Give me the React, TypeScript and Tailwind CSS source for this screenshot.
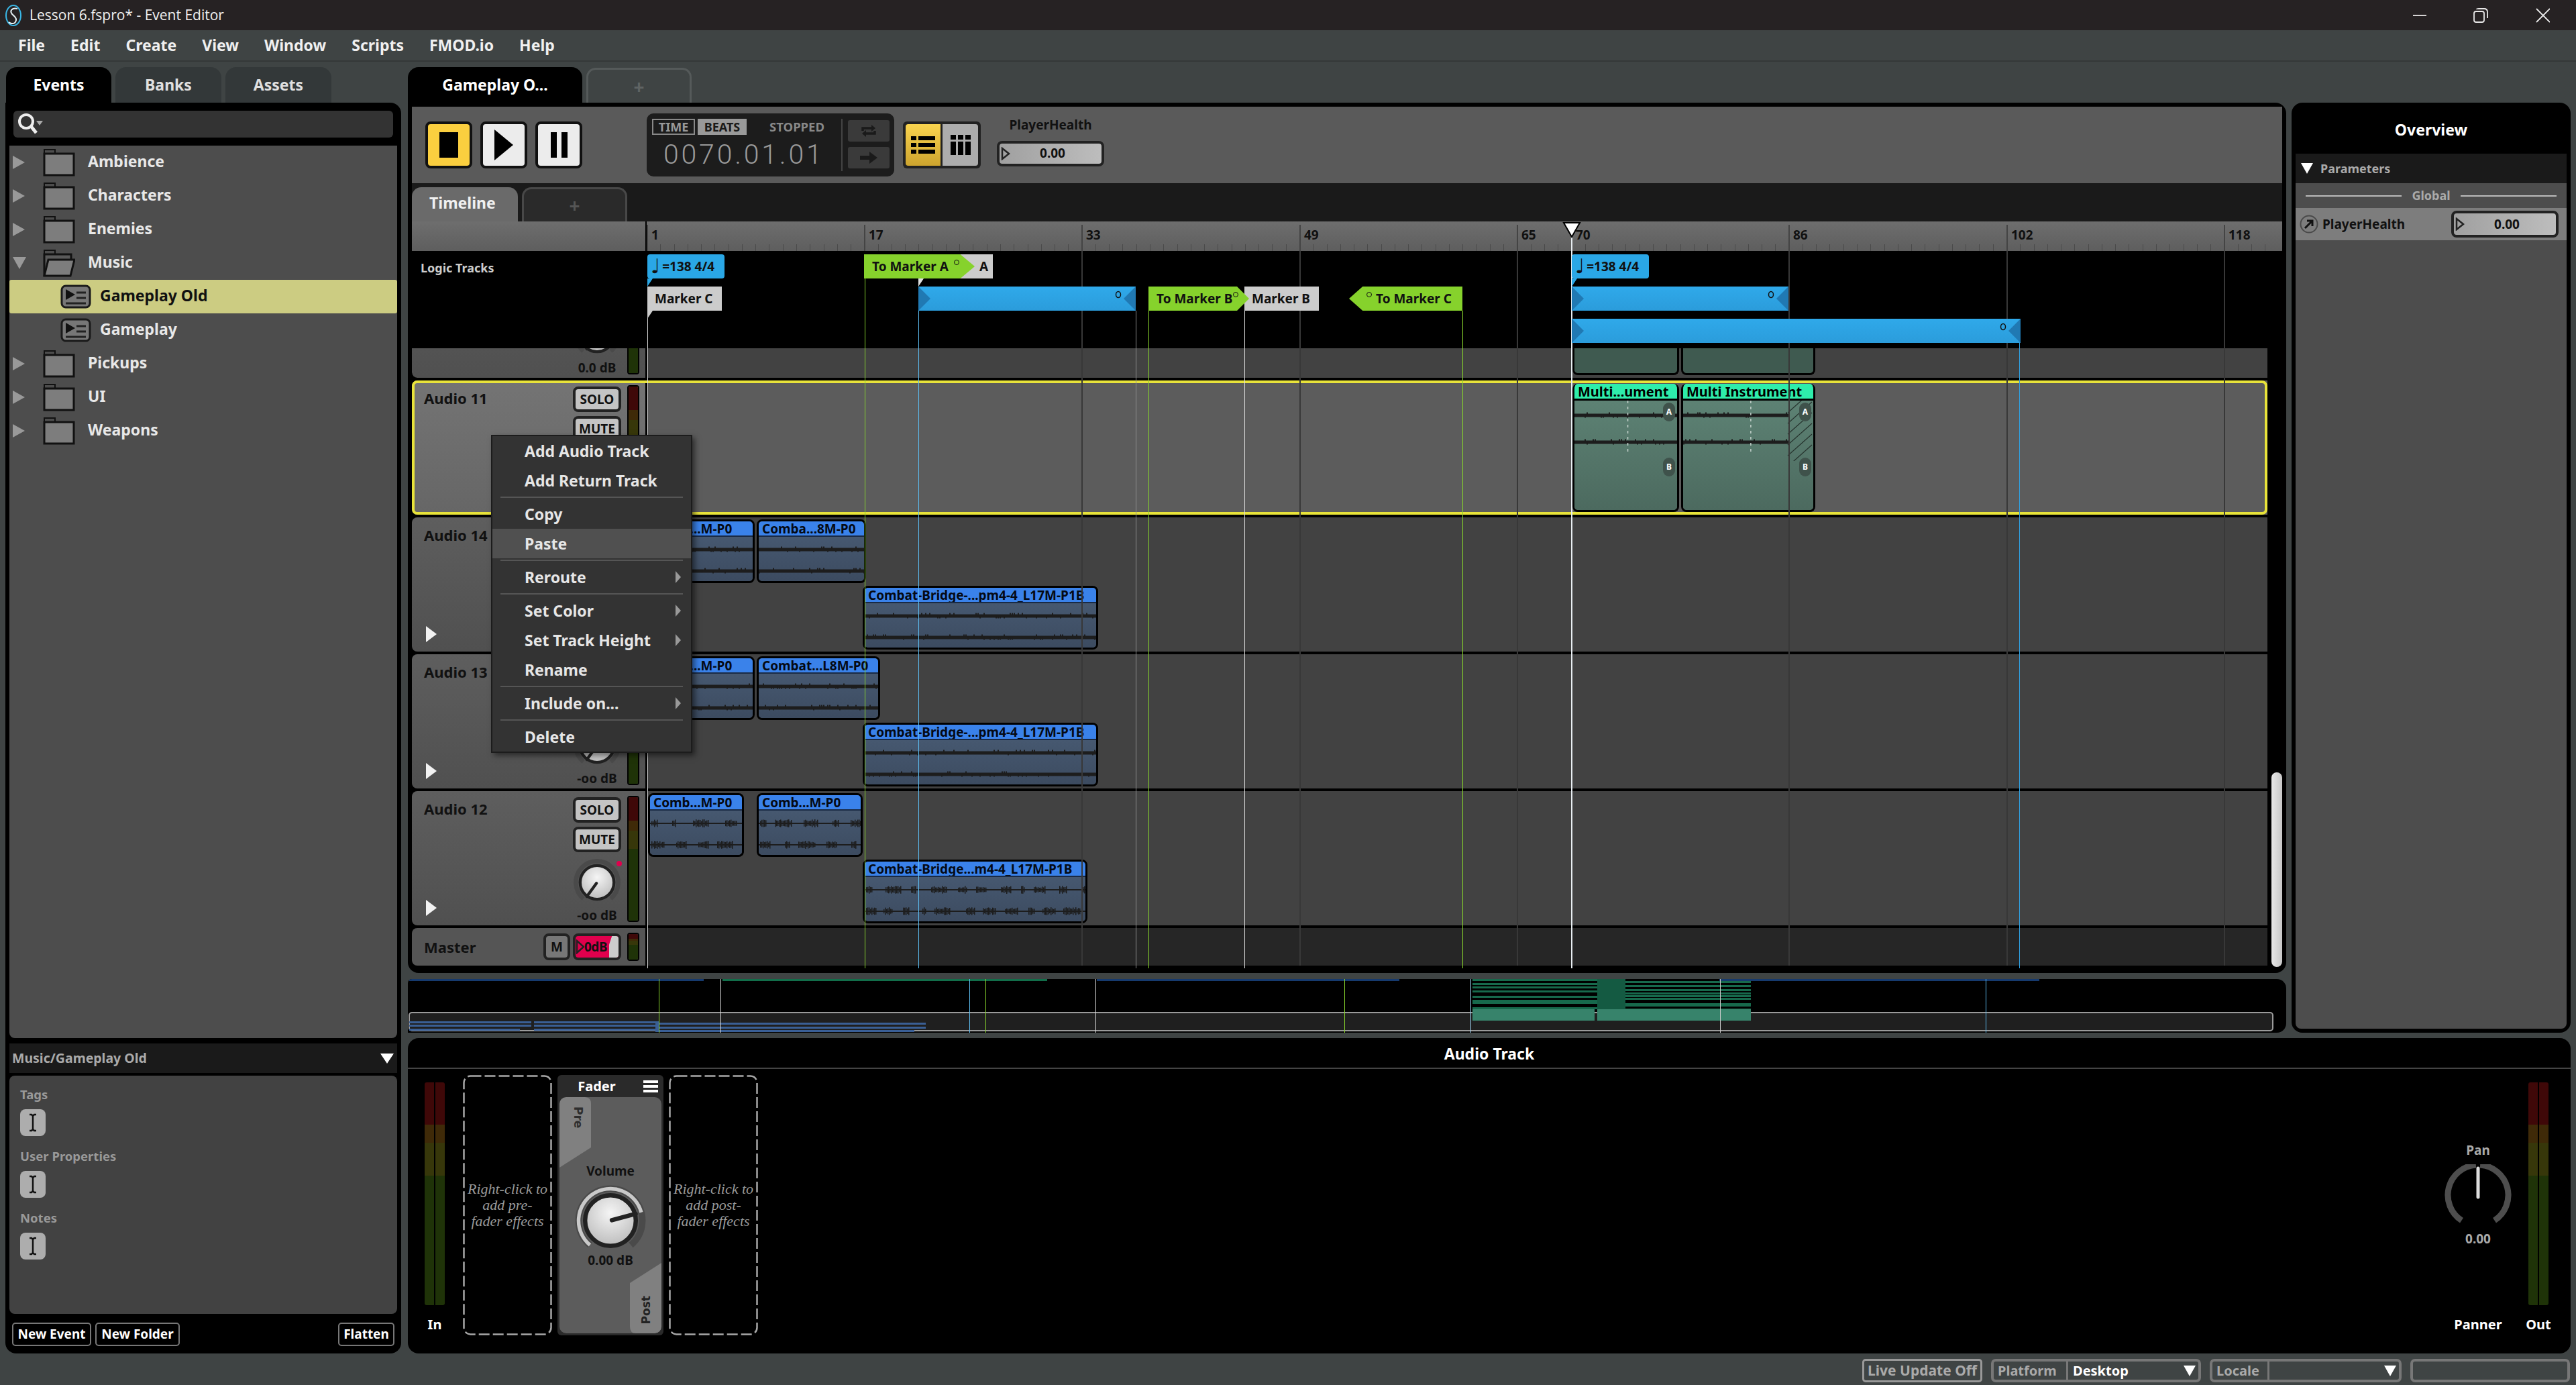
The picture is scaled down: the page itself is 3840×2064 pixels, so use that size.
import React from "react";

const T0 = 614;
const LOG_Y = 374;

function rng(seed: number) {
  let s = seed;
  return () => {
    s = (s * 1664525 + 1013904223) % 4294967296;
    return s / 4294967296;
  };
}

function arc(r: number, a: number, b: number) {
  const p = (d: number) => {
    const t = ((d - 90) * Math.PI) / 180;
    return `${(r * Math.cos(t)).toFixed(2)} ${(r * Math.sin(t)).toFixed(2)}`;
  };
  return `M${p(a)} A${r} ${r} 0 ${b - a > 180 ? 1 : 0} 1 ${p(b)}`;
}

function Knob({ size, value, active, id }: { size: number; value: number; active: boolean; id: string }) {
  const t = ((value - 90) * Math.PI) / 180;
  const gid = id.replace(/\s/g, "");
  return (
    <svg width={size} height={size} viewBox="-50 -50 100 100" className="block">
      <defs>
        <radialGradient id={gid} cx="50%" cy="35%" r="65%">
          <stop offset="0%" stopColor="#f5f5f5" />
          <stop offset="100%" stopColor="#bdbdbd" />
        </radialGradient>
      </defs>
      <path d={arc(44, -140, 140)} fill="none" stroke="#4a4a4a" strokeWidth="9" />
      {active && <path d={arc(44, -140, value)} fill="none" stroke="#c9c9c9" strokeWidth="5" />}
      <circle r="35" fill={`url(#${gid})`} stroke="#222" strokeWidth="6" />
      <line x1={Math.cos(t) * 2} y1={Math.sin(t) * 2} x2={Math.cos(t) * 36} y2={Math.sin(t) * 36} stroke="#222" strokeWidth="6" strokeLinecap="round" />
    </svg>
  );
}

function Meter({ h, dual }: { h: number; dual?: boolean }) {
  const seg = (
    <div className="flex flex-col h-full flex-1 overflow-hidden">
      <div className="bg-[#3f0808] h-[19%]" />
      <div className="bg-[#3f2a08] h-[8%]" />
      <div className="bg-[#37370a] h-[15%]" />
      <div className="bg-[#1f3308] flex-1" />
    </div>
  );
  return (
    <div style={{ height: h }} className={dual ? "w-[30px] flex gap-[2px] rounded-[3px] overflow-hidden" : "w-[18px] flex border-2 border-black rounded-[4px] overflow-hidden"}>
      {seg}
      {dual && seg}
    </div>
  );
}

function SmallBtn({ label }: { label: string }) {
  return (
    <div className="w-[72px] h-[38px] rounded-[8px] border-[4px] border-[#222] bg-[#c4c4c4] flex items-center justify-center text-[19px] font-bold text-[#111]">
      {label}
    </div>
  );
}

function TrackHeader({ name, db, dot, sel, noTri }: { name: string; db: string; dot?: boolean; sel?: boolean; noTri?: boolean }) {
  return (
    <div className={sel ? "w-[348px] h-[200px] flex bg-linear-to-b from-[#747474] to-[#666666] rounded-l-[8px]" : "w-[348px] h-[200px] flex bg-linear-to-b from-[#5e5e5e] to-[#505050] rounded-l-[8px]"}>
      <div className="flex-1 flex flex-col justify-between pl-[18px] pt-[11px] pb-[12px]">
        <div className="text-[22px] font-bold text-[#111] leading-[30px]">{name}</div>
        {!sel && !noTri && (
          <svg width="18" height="26" viewBox="0 0 18 26" className="ml-[2px] mb-[1px]">
            <path d="M1 1 L17 13 L1 25 Z" fill="#f2f2f2" />
          </svg>
        )}
      </div>
      <div className="w-[72px] pt-[9px] flex flex-col items-center">
        <SmallBtn label="SOLO" />
        <div className="mt-[6px]"><SmallBtn label="MUTE" /></div>
        <div className="relative mt-[9px] h-[72px] flex items-center">
          <Knob size={72} value={216} active={false} id={"k" + name} />
          {dot && <div className="absolute right-[-1px] top-[4px] w-[8px] h-[8px] rounded-full bg-[#e0004d]" />}
        </div>
        <div className="text-[19px] font-bold text-[#111] leading-[26px]">{db}</div>
      </div>
      <div className="w-[18px] ml-[9px] mr-[9px] pt-[7px]"><Meter h={188} /></div>
    </div>
  );
}

function Wave({ w, ys, kind, seed, color = "#1d1d1d", h = 70 }: { w: number; ys: number[]; kind: "band" | "burst"; seed: number; color?: string; h?: number }) {
  const r = rng(seed);
  const rects: React.ReactNode[] = [];
  ys.forEach((y, ci) => {
    if (kind === "band") {
      rects.push(<rect key={`b${ci}`} x="0" y={y - 2.5} width={w} height="5" fill={color} />);
      for (let x = 0; x < w; x += 3) {
        const v = r();
        if (v > 0.72) rects.push(<rect key={`s${ci}-${x}`} x={x} y={y - 2.5 + (v > 0.86 ? -2 : 3)} width="2" height={3} fill={color} />);
      }
    } else {
      rects.push(<rect key={`b${ci}`} x="0" y={y - 1} width={w} height="2" fill={color} />);
      let x = 2;
      while (x < w) {
        const len = 6 + Math.floor(r() * 20);
        for (let i = x; i < Math.min(x + len, w); i += 2) {
          const a = 3 + r() * 3;
          rects.push(<rect key={`s${ci}-${i}`} x={i} y={y - a} width="1.5" height={a * 2} fill={color} />);
        }
        x += len + 10 + Math.floor(r() * 16);
      }
    }
  });
  return (
    <svg width={w} height={h} className="absolute left-0 top-0">
      {rects}
    </svg>
  );
}

type ClipData = { x: number; w: number; y: number; t: string; kind: "band" | "burst"; seed: number };

function Clip({ c }: { c: ClipData }) {
  return (
    <div style={{ left: c.x - 966, top: c.y, width: c.w }} className="absolute h-[95px] rounded-[8px] border-[3px] border-black overflow-hidden flex flex-col">
      <div className="h-[23px] bg-[#3a82ea] border-b-2 border-[#1a2a44] pl-[5px] text-[19px] font-bold leading-[22px] text-[#050a14] whitespace-nowrap overflow-hidden shrink-0">{c.t}</div>
      <div className="flex-1 relative bg-linear-to-b from-[#465870] to-[#3c4b60]">
        <Wave w={c.w - 6} ys={[19, 51]} kind={c.kind} seed={c.seed} />
      </div>
    </div>
  );
}

function TealDetails({ w, hatch, h }: { w: number; hatch: boolean; h: number }) {
  return (
    <svg width={w} height={h} className="absolute left-0 top-0">
      <line x1={w * 0.52} y1="0" x2={w * 0.52} y2="80" stroke="#c5d2cc" strokeWidth="1.5" strokeDasharray="4 5" />
      {hatch &&
        [0, 1, 2, 3, 4, 5].map((i) => (
          <line key={i} x1={w - 38} y1={18 + i * 16} x2={w - 2} y2={-14 + i * 16} stroke="#26332e" strokeWidth="1.2" />
        ))}
    </svg>
  );
}

function TealClip({ x, w, label, seed, hatch, dark }: { x: number; w: number; label: string; seed: number; hatch: boolean; dark?: boolean }) {
  return (
    <div style={{ left: x - 966, width: w }} className="absolute top-[5px] h-[191px] rounded-[8px] border-x-[3px] border-b-[3px] border-black overflow-hidden flex flex-col">
      <div className="h-[25px] bg-[#2eedab] border-b-[3px] border-black pl-[5px] text-[20px] font-bold leading-[24px] text-black whitespace-nowrap shrink-0">{label}</div>
      <div className={dark ? "flex-1 relative bg-[#3f5a50]" : "flex-1 relative bg-linear-to-b from-[#5d8274] to-[#4c6a5f]"}>
        <Wave w={hatch ? w - 43 : w - 6} ys={[22, 62]} kind="band" seed={seed} h={80} />
        <TealDetails w={w - 6} hatch={hatch} h={90} />
        {!dark && (
          <>
            <div style={{ left: w - 27 }} className="absolute top-[3px] w-[18px] h-[28px] rounded-full bg-[#3f524b] flex items-center justify-center text-[12px] font-bold text-white">A</div>
            <div style={{ left: w - 27 }} className="absolute top-[85px] w-[18px] h-[28px] rounded-full bg-[#3f524b] flex items-center justify-center text-[12px] font-bold text-white">B</div>
          </>
        )}
      </div>
    </div>
  );
}

function Lane({ dark, sel, children }: { dark?: boolean; sel?: boolean; children?: React.ReactNode }) {
  return (
    <div className={dark ? "flex-1 ml-[4px] relative bg-[#262626]" : sel ? "flex-1 ml-[4px] relative bg-[#5c5c5c]" : "flex-1 ml-[4px] relative bg-[#424242]"}>{children}</div>
  );
}

function Marker({ x, y, w, bg, tail, className, children }: { x: number; y: number; w: number; bg: string; tail?: string; className?: string; children?: React.ReactNode }) {
  return (
    <div style={{ left: x - T0, top: y - LOG_Y, width: w }} className="absolute h-[36px]">
      <div style={{ background: bg }} className={"h-full flex items-center text-[19px] font-bold text-[#111] whitespace-nowrap " + (className || "")}>{children}</div>
      {tail && (
        <svg width="8" height="12" className="absolute left-0 top-[36px]">
          <path d="M0 0 H8 L0 12 Z" fill={tail} />
        </svg>
      )}
    </div>
  );
}

function LoopBar({ x, y, w }: { x: number; y: number; w: number }) {
  return (
    <div style={{ left: x - T0, top: y - LOG_Y, width: w }} className="absolute h-[36px] bg-linear-to-b from-[#2fa9ea] to-[#2b9cdb]">
      <svg width={w} height="36" className="absolute left-0 top-0">
        <path d="M0 0 L18 18 L0 36 Z" fill="#2079b3" />
        <path d={`M${w} 0 L${w - 18} 18 L${w} 36 Z`} fill="#2079b3" />
        <ellipse cx={w - 26} cy="12" rx="3.5" ry="4.5" fill="none" stroke="#111" strokeWidth="1.5" />
      </svg>
    </div>
  );
}

const RING = <span className="inline-block w-[8px] h-[8px] rounded-full border-[1.5px] border-[#111] mb-[12px]" />;

function Tempo({ x }: { x: number }) {
  return (
    <Marker x={x} y={379} w={115} bg="#2aa7e6" tail="#2aa7e6" className="rounded-[4px] pl-[5px]">
      <span className="text-[30px] leading-none font-['DejaVu_Sans'] mr-[3px]">♩</span>
      <span className="text-[19px]">=138 4/4</span>
    </Marker>
  );
}

function LogicMarkers() {
  return (
    <div className="absolute inset-0 z-[15]">
      <Tempo x={965} />
      <Marker x={965} y={427} w={111} bg="#cccccc" tail="#cccccc" className="pl-[11px]">Marker C</Marker>
      <Marker x={1400} y={379} w={80} bg="#cccccc" className="pl-[60px]">A</Marker>
      <Marker x={1288} y={379} w={165} bg="#86d22c" className="pl-[12px] gap-[8px] [clip-path:polygon(0_0,87%_0,100%_50%,87%_100%,0_100%)]">
        <span>To Marker A</span>{RING}
      </Marker>
      <svg style={{ left: 1369 - T0, top: 415 - LOG_Y }} width="8" height="12" className="absolute">
        <path d="M0 0 H8 L0 12 Z" fill="#e0e0e0" />
      </svg>
      <LoopBar x={1369} y={427} w={324} />
      <Marker x={1855} y={427} w={111} bg="#cccccc" className="pl-[11px]">Marker B</Marker>
      <Marker x={1712} y={427} w={150} bg="#86d22c" className="pl-[12px] gap-[1px] [clip-path:polygon(0_0,88%_0,100%_50%,88%_100%,0_100%)]">
        <span>To Marker B</span>{RING}
      </Marker>
      <Marker x={2011} y={427} w={169} bg="#86d22c" className="pl-[26px] gap-[6px] [clip-path:polygon(12%_0,100%_0,100%_100%,12%_100%,0_50%)]">
        {RING}<span>To Marker C</span>
      </Marker>
      <Tempo x={2343} />
      <LoopBar x={2343} y={427} w={323} />
      <LoopBar x={2343} y={475} w={669} />
    </div>
  );
}

const GRID = [1612, 1937, 2261, 2666, 2991, 3315];
const VLINES: [number, number, string, number][] = [
  [965, 463, "#dcdcdc", 1],
  [1289, 415, "#86d22c", 1],
  [1369, 463, "#5cbcf0", 1],
  [1693, 463, "#8f8f8f", 1],
  [1712, 463, "#86d22c", 1],
  [1855, 463, "#dcdcdc", 1],
  [2180, 463, "#86d22c", 1],
  [2342, 350, "#e8eef2", 2],
  [3010, 511, "#2f9fe0", 1],
];

function Ruler() {
  const ticks: number[] = [];
  for (let i = 0; i < 120; i++) ticks.push(964 + i * 20.27);
  const labels: [string, number][] = [["1", 964], ["17", 1288], ["33", 1612], ["49", 1937], ["65", 2261], ["70", 2342], ["86", 2666], ["102", 2991], ["118", 3315]];
  return (
    <div className="relative h-[44px] bg-linear-to-b from-[#6e6e6e] to-[#5e5e5e]">
      <div style={{ left: 962 - T0 }} className="absolute top-0 h-full w-[2px] bg-black" />
      {ticks.map((x) => (
        <div key={x} style={{ left: x - T0 }} className="absolute bottom-0 h-[10px] w-[1px] bg-[#4a4a4a]" />
      ))}
      {labels.map(([t, x]) => (
        <React.Fragment key={t}>
          <div style={{ left: x - T0 }} className="absolute top-[5px] bottom-0 w-[2px] bg-[#444444]" />
          <div style={{ left: x - T0 + 7 }} className="absolute top-[7px] text-[19px] font-bold leading-[26px] text-[#111]">{t}</div>
        </React.Fragment>
      ))}
    </div>
  );
}

function Overlay() {
  return (
    <div className="absolute inset-0 pointer-events-none">
      {GRID.map((x) => (
        <div key={x} style={{ left: x - T0, top: 44, height: 1065 }} className="absolute w-[2px] bg-[#383838] z-10" />
      ))}
      {VLINES.map(([x, y, c, w]) => (
        <div key={x} style={{ left: x - T0, top: y - 330, height: 1443 - y, background: c, width: w }} className="absolute z-10" />
      ))}
      <svg style={{ left: 2342 - T0 - 13, top: 1 }} width="28" height="24" className="absolute z-20">
        <path d="M2 1 H26 L14 22 Z" fill="#fff" stroke="#000" strokeWidth="2" />
      </svg>
    </div>
  );
}

function MenuItem({ label, arrow, hi }: { label: string; arrow?: boolean; hi?: boolean }) {
  return (
    <div className={hi ? "h-[44px] flex items-center justify-between pl-[48px] pr-[14px] bg-[#505050]" : "h-[44px] flex items-center justify-between pl-[48px] pr-[14px]"}>
      <span className="text-[23px] font-bold text-[#e6e6e6]">{label}</span>
      {arrow && (
        <svg width="10" height="20" viewBox="0 0 10 20">
          <path d="M1 1 L9 10 L1 19 Z" fill="#999" />
        </svg>
      )}
    </div>
  );
}
const MenuSep = () => (
  <div className="h-[6px] flex items-center px-[12px]">
    <div className="h-[2px] w-full bg-[#555]" />
  </div>
);

function ContextMenu() {
  return (
    <div className="absolute left-[118px] top-[129px] w-[300px] h-[474px] z-30 bg-[#333333] border-2 border-[#1c1c1c] shadow-[4px_4px_8px_rgba(0,0,0,0.5)]">
      <MenuItem label="Add Audio Track" />
      <MenuItem label="Add Return Track" />
      <MenuSep />
      <MenuItem label="Copy" />
      <MenuItem label="Paste" hi />
      <MenuSep />
      <MenuItem label="Reroute" arrow />
      <MenuSep />
      <MenuItem label="Set Color" arrow />
      <MenuItem label="Set Track Height" arrow />
      <MenuItem label="Rename" />
      <MenuSep />
      <MenuItem label="Include on..." arrow />
      <MenuSep />
      <MenuItem label="Delete" />
    </div>
  );
}

function Tracks() {
  const a14: ClipData[] = [
    { x: 966, w: 159, y: 3, t: "Comb...M-P0", kind: "band", seed: 11 },
    { x: 1128, w: 163, y: 3, t: "Comba...8M-P0", kind: "band", seed: 12 },
    { x: 1286, w: 351, y: 102, t: "Combat-Bridge-...pm4-4_L17M-P1B", kind: "band", seed: 13 },
  ];
  const a13: ClipData[] = [
    { x: 966, w: 159, y: 3, t: "Comb...M-P0", kind: "band", seed: 21 },
    { x: 1128, w: 184, y: 3, t: "Combat...L8M-P0", kind: "band", seed: 22 },
    { x: 1286, w: 351, y: 102, t: "Combat-Bridge-...pm4-4_L17M-P1B", kind: "band", seed: 23 },
  ];
  const a12: ClipData[] = [
    { x: 966, w: 143, y: 3, t: "Comb...M-P0", kind: "burst", seed: 31 },
    { x: 1128, w: 158, y: 3, t: "Comb...M-P0", kind: "burst", seed: 32 },
    { x: 1286, w: 335, y: 102, t: "Combat-Bridge...m4-4_L17M-P1B", kind: "burst", seed: 33 },
  ];
  return (
    <div className="relative flex h-[920px]">
      <div className="w-[2766px] flex flex-col gap-[4px]">
        <div className="h-[44px] flex overflow-hidden rounded-bl-[8px]">
          <div className="h-[44px] overflow-hidden">
            <div className="mt-[-156px]"><TrackHeader name="Audio 15" db="0.0 dB" dot noTri /></div>
          </div>
          <Lane>
            <div className="absolute left-0 right-0 top-[-156px] h-[200px]">
              <TealClip x={2344} w={159} label="Multi...ument" seed={41} hatch={false} dark />
              <TealClip x={2506} w={200} label="Multi Instrument" seed={42} hatch dark />
            </div>
          </Lane>
        </div>
        <div className="relative h-[200px] flex">
          <TrackHeader name="Audio 11" db="0.0 dB" dot sel />
          <Lane sel>
            <TealClip x={2344} w={159} label="Multi...ument" seed={43} hatch={false} />
            <TealClip x={2506} w={200} label="Multi Instrument" seed={44} hatch />
          </Lane>
          <div className="absolute inset-0 border-[4px] border-[#e8e33a] rounded-[8px] pointer-events-none" />
        </div>
        <div className="h-[200px] flex">
          <TrackHeader name="Audio 14" db="-oo dB" dot />
          <Lane>{a14.map((c) => <Clip key={c.x} c={c} />)}</Lane>
        </div>
        <div className="h-[200px] flex">
          <TrackHeader name="Audio 13" db="-oo dB" dot />
          <Lane>{a13.map((c) => <Clip key={c.x} c={c} />)}</Lane>
        </div>
        <div className="h-[200px] flex">
          <TrackHeader name="Audio 12" db="-oo dB" dot />
          <Lane>{a12.map((c) => <Clip key={c.x} c={c} />)}</Lane>
        </div>
        <div className="h-[56px] flex">
          <div className="w-[348px] h-[56px] flex items-center bg-[#555555] rounded-l-[8px] pl-[18px]">
            <div className="flex-1 text-[22px] font-bold text-[#111]">Master</div>
            <div className="w-[40px] h-[40px] mr-[4px] rounded-[8px] border-[4px] border-[#222] bg-[#777] flex items-center justify-center text-[19px] font-bold text-[#111]">M</div>
            <div className="w-[72px] h-[40px] rounded-[8px] border-[4px] border-[#222] bg-[#e0004d] overflow-hidden flex items-center relative">
              <svg width="12" height="22" viewBox="0 0 12 22" className="ml-[1px] shrink-0">
                <path d="M1 2 L11 11 L1 20 Z" fill="none" stroke="#222" strokeWidth="2.5" />
              </svg>
              <div className="absolute right-0 top-0 bottom-0 w-[14px] bg-[#cccccc] [clip-path:polygon(30%_0,100%_0,100%_100%,0_100%,0_40%)]" />
              <span className="relative text-[19px] font-bold text-[#111] leading-none tracking-[-0.5px]">0dB</span>
            </div>
            <div className="w-[18px] mx-[9px]"><Meter h={42} /></div>
          </div>
          <Lane dark />
        </div>
      </div>
      <div className="w-[22px] pl-[6px] pt-[632px]">
        <div className="w-[16px] h-[290px] rounded-full bg-linear-to-r from-[#e8e8e8] to-[#c8c8c8]" />
      </div>
      <ContextMenu />
    </div>
  );
}

function TransportBtn({ bg, children }: { bg: string; children: React.ReactNode }) {
  return (
    <div style={{ background: bg }} className="w-[70px] h-[70px] rounded-[8px] border-[4px] border-[#111] flex items-center justify-center">
      {children}
    </div>
  );
}

function Toolbar() {
  return (
    <div className="h-[114px] bg-[#5a5a5a] flex items-center pl-[20px]">
      <div className="flex gap-[12px]">
        <TransportBtn bg="#fbcf3f"><div className="w-[28px] h-[38px] bg-black" /></TransportBtn>
        <TransportBtn bg="#ececec">
          <svg width="28" height="46" viewBox="0 0 28 46"><path d="M0 0 L28 23 L0 46 Z" fill="#000" /></svg>
        </TransportBtn>
        <TransportBtn bg="#ececec">
          <div className="flex gap-[7px]"><div className="w-[9px] h-[38px] bg-black" /><div className="w-[9px] h-[38px] bg-black" /></div>
        </TransportBtn>
      </div>
      <div className="ml-[96px] w-[369px] h-[94px] rounded-[10px] bg-[#1c1c1c] flex pl-[8px] pr-[7px] py-[8px]">
        <div className="w-[283px] flex flex-col">
          <div className="flex items-center h-[24px]">
            <div className="w-[64px] h-[24px] border-2 border-[#888] flex items-center justify-center text-[18px] font-bold text-[#999]">TIME</div>
            <div className="ml-[4px] w-[73px] h-[24px] bg-[#999] flex items-center justify-center text-[18px] font-bold text-[#1a1a1a]">BEATS</div>
            <div className="ml-[34px] text-[18.5px] font-bold text-[#888]">STOPPED</div>
          </div>
          <div className="mt-[6px] pl-[17px] text-[41px] leading-[46px] font-light text-[#9a9a9a] tracking-[3.8px] font-['Roboto'] whitespace-nowrap">0070.01.01</div>
        </div>
        <div className="w-[2px] bg-[#444]" />
        <div className="ml-[8px] flex flex-col gap-[8px] pt-[2px]">
          <div className="w-[62px] h-[32px] bg-[#3a3a3a] rounded-[3px] flex items-center justify-center">
            <svg width="24" height="24" viewBox="0 0 24 24" fill="none" stroke="#1a1a1a" strokeWidth="3.5">
              <path d="M3 12 V8 H18" /><path d="M21 12 V16 H6" />
              <path d="M16 3 L22 8 L16 13 Z" fill="#1a1a1a" stroke="none" /><path d="M8 11 L2 16 L8 21 Z" fill="#1a1a1a" stroke="none" />
            </svg>
          </div>
          <div className="w-[62px] h-[32px] bg-[#3a3a3a] rounded-[3px] flex items-center justify-center">
            <svg width="26" height="18" viewBox="0 0 26 18"><path d="M0 6 H14 V0 L26 9 L14 18 V12 H0 Z" fill="#1a1a1a" /></svg>
          </div>
        </div>
      </div>
      <div className="ml-[13px] w-[116px] h-[70px] rounded-[6px] bg-[#222] p-[4px] flex gap-[3px]">
        <div className="w-[52px] rounded-l-[4px] bg-linear-to-b from-[#fad44e] to-[#cda42e] flex flex-col justify-center gap-[4px] px-[8px]">
          {[0, 1, 2].map((i) => (
            <div key={i} className="flex gap-[3px]"><div className="w-[8px] h-[6px] bg-black" /><div className="flex-1 h-[6px] bg-black" /></div>
          ))}
        </div>
        <div className="flex-1 rounded-r-[4px] bg-[#adadad] flex items-center justify-center gap-[3px]">
          {[0, 1, 2].map((i) => (
            <div key={i} className="flex flex-col gap-[3px] w-[8px]"><div className="h-[7px] bg-black" /><div className="h-[20px] bg-black" /></div>
          ))}
        </div>
      </div>
      <div className="ml-[24px] w-[160px] flex flex-col items-center mt-[-12px]">
        <div className="text-[19px] font-bold text-[#111] leading-[26px]">PlayerHealth</div>
        <div className="mt-[11px] w-full"><ParamInput w={160} h={38} /></div>
      </div>
    </div>
  );
}

function ParamInput({ w, h }: { w: number; h: number }) {
  return (
    <div style={{ width: w, height: h }} className="rounded-[8px] border-[4px] border-[#222] bg-linear-to-r from-[#a0a0a0] to-[#bdbdbd] flex items-center relative">
      <svg width="14" height="20" viewBox="0 0 14 20" className="absolute left-[2px]">
        <path d="M2 2 L12 10 L2 18 Z" fill="none" stroke="#222" strokeWidth="2.5" />
      </svg>
      <div className="flex-1 text-center text-[19px] font-bold text-[#111] pl-[6px]">0.00</div>
    </div>
  );
}

function TabInner({ label, active, w, sub }: { label?: string; active?: boolean; w: number; sub?: boolean }) {
  if (label && sub) {
    return (
      <div style={{ width: w }} className="h-[51px] rounded-t-[14px] bg-[#6a6a6a] text-[23px] font-bold text-[#f0f0f0] pl-[26px] pt-[8px] leading-[30px] mt-[6px]">{label}</div>
    );
  }
  if (label) {
    return (
      <div style={{ width: w }} className={active ? "h-[53px] rounded-t-[16px] bg-black text-white text-[23px] font-bold flex items-center justify-center" : "h-[53px] rounded-t-[16px] bg-[#333839] text-[#e0e0e0] text-[23px] font-bold flex items-center justify-center"}>{label}</div>
    );
  }
  return (
    <div style={{ width: w }} className={sub ? "h-[51px] mt-[6px] rounded-t-[14px] border-[3px] border-b-0 border-[#484848] bg-[#2a2a2a] flex items-center justify-center text-[28px] font-bold text-[#555]" : "h-[52px] mt-[1px] rounded-t-[14px] border-[3px] border-b-0 border-[#555a5a] flex items-center justify-center text-[28px] font-bold text-[#5f6464]"}>+</div>
  );
}

function EventPanel() {
  return (
    <div className="bg-black rounded-[16px] rounded-tl-none p-[6px] pb-[11px] h-[1297px]">
      <Toolbar />
      <div className="h-[57px] bg-[#1a1a1a] flex gap-[6px]">
        <TabInner label="Timeline" sub w={158} />
        <TabInner sub w={157} />
      </div>
      <div className="relative">
        <Ruler />
        <div className="relative h-[145px] bg-black">
          <div className="absolute left-[13px] top-[13px] text-[18px] font-bold text-[#cccccc] leading-[24px]">Logic Tracks</div>
          <LogicMarkers />
        </div>
        <Tracks />
        <Overlay />
      </div>
    </div>
  );
}

function MiniMap() {
  const tops: [number, number, string][] = [
    [610, 1049, "#163a6e"], [1077, 1561, "#126e4a"], [1635, 2086, "#163a6e"], [2563, 3040, "#163a6e"],
  ];
  const lowers: [number, number, number][] = [
    [610, 792, 1522], [796, 982, 1522], [610, 792, 1527], [796, 982, 1527], [610, 775, 1533], [796, 982, 1533],
    [977, 1380, 1524], [977, 1380, 1530], [977, 1363, 1535],
  ];
  const tealA = [1459, 1465, 1470, 1476, 1484, 1490, 1493, 1501];
  const tealB = [1462, 1468, 1474, 1479, 1483, 1487, 1495, 1497, 1503];
  const lines: [number, string][] = [
    [982, "#86d22c"], [1074, "#dcdcdc"], [1445, "#5cbcf0"], [1469, "#86d22c"], [1633, "#dcdcdc"],
    [2004, "#86d22c"], [2192, "#9fd0ee"], [2564, "#cccccc"], [2960, "#5cbcf0"],
  ];
  const Y = 1459;
  return (
    <div className="relative h-[80px] bg-black rounded-tl-[6px] rounded-r-[14px] overflow-hidden">
      <div className="absolute left-[1px] top-[49px] w-[2780px] h-[29px] bg-[#1f1f1f] border-y-2 border-x-2 border-[#9a9a9a] rounded-[5px]" />
      {tops.map(([a, b, c]) => (
        <div key={a} style={{ left: a - 608, width: b - a, background: c }} className="absolute top-0 h-[3px]" />
      ))}
      {lowers.map(([a, b, y], i) => (
        <div key={i} style={{ left: a - 608, width: b - a, top: y - Y }} className="absolute h-[3px] bg-[#3a5f95]" />
      ))}
      {tealA.map((y) => (
        <div key={y} style={{ left: 2195 - 608, width: 228, top: y - Y }} className="absolute h-[3px] bg-[#17694c]" />
      ))}
      {tealB.map((y) => (
        <div key={y} style={{ left: 2381 - 608, width: 229, top: y - Y }} className="absolute h-[3px] bg-[#17694c]" />
      ))}
      <div style={{ left: 2381 - 608 }} className="absolute top-0 w-[42px] h-[45px] bg-[#145a42]" />
      <div style={{ left: 2195 - 608 }} className="absolute top-[45px] w-[182px] h-[17px] bg-[#37836b]" />
      <div style={{ left: 2381 - 608 }} className="absolute top-[45px] w-[229px] h-[17px] bg-[#37836b]" />
      {lines.map(([x, c]) => (
        <div key={x} style={{ left: x - 608, background: c }} className="absolute top-0 bottom-0 w-[1px]" />
      ))}
    </div>
  );
}

function Overview() {
  return (
    <div className="w-[416px] mt-[53px] h-[1386px] bg-black rounded-[16px] px-[6px] pb-[6px] flex flex-col">
      <div className="h-[76px] pt-[4px] flex items-center justify-center text-[23px] font-bold text-white">Overview</div>
      <div className="h-[44px] bg-[#1a1a1a] flex items-center pl-[8px] gap-[11px]">
        <svg width="18" height="16" viewBox="0 0 18 16"><path d="M0 0 H18 L9 16 Z" fill="#fff" /></svg>
        <span className="text-[18px] font-bold text-[#aaaaaa]">Parameters</span>
      </div>
      <div className="flex-1 bg-[#4d4d4d] rounded-b-[8px]">
        <div className="h-[37px] flex items-center px-[15px] gap-[15px]">
          <div className="flex-1 h-[2px] bg-[#bbb]" />
          <span className="text-[18px] font-bold text-[#aaaaaa]">Global</span>
          <div className="flex-1 h-[2px] bg-[#bbb]" />
        </div>
        <div className="h-[48px] bg-[#7d7d7d] flex items-center pl-[6px] pr-[12px]">
          <svg width="28" height="28" viewBox="0 0 28 28" className="shrink-0">
            <circle cx="14" cy="14" r="12.5" fill="none" stroke="#4a4a4a" strokeWidth="2" />
            <path d="M8 20 L18 10 M11 9 H19 V17" fill="none" stroke="#111" strokeWidth="3" />
          </svg>
          <span className="ml-[6px] flex-1 text-[19px] font-bold text-[#111]">PlayerHealth</span>
          <ParamInput w={160} h={40} />
        </div>
      </div>
    </div>
  );
}

function Dashed({ text }: { text: string[] }) {
  return (
    <div className="relative w-[133px] h-[388px] flex flex-col items-center justify-center font-['Liberation_Serif'] italic text-[22px] leading-[24px] text-[#999]">
      <svg width="133" height="388" className="absolute left-0 top-0">
        <rect x="1.5" y="1.5" width="130" height="385" rx="10" fill="none" stroke="#a8a8a8" strokeWidth="2.5" strokeDasharray="16 5" />
      </svg>
      <div className="flex flex-col items-center">
        {text.map((l) => <div key={l} className="whitespace-nowrap">{l}</div>)}
      </div>
    </div>
  );
}

function Fader() {
  return (
    <div className="w-[158px] h-[388px] bg-[#2a2a2a] rounded-[6px] px-[3px] pb-[3px] flex flex-col">
      <div className="h-[33px] flex items-center shrink-0">
        <div className="flex-1 text-center text-[20px] font-bold text-white pr-[27px] pl-[13px]">Fader</div>
        <div className="flex flex-col gap-[3px] mr-[5px]">
          <div className="w-[22px] h-[4px] bg-white" /><div className="w-[22px] h-[4px] bg-white" /><div className="w-[22px] h-[4px] bg-white" />
        </div>
      </div>
      <div className="relative flex-1 bg-[#5c5c5c] rounded-[10px] overflow-hidden flex flex-col items-center">
        <svg width="152" height="352" className="absolute left-0 top-0">
          <path d="M0 10 Q0 0 10 0 H38 Q47 0 47 10 V75 L0 105 Z" fill="#808080" />
          <path d="M152 342 Q152 352 142 352 H114 Q105 352 105 342 V277 L152 247 Z" fill="#808080" />
        </svg>
        <div className="absolute left-[14px] top-[14px] [writing-mode:vertical-rl] text-[17px] font-bold font-['DejaVu_Sans'] text-[#2e2e2e]">Pre</div>
        <div className="absolute right-[10px] bottom-[14px] [writing-mode:vertical-rl] rotate-180 text-[17px] font-bold font-['DejaVu_Sans'] text-[#222]">Post</div>
        <div className="relative mt-[97px] text-[19px] font-bold text-[#111] leading-[26px]">Volume</div>
        <div className="relative mt-[7px]"><Knob size={108} value={75} active id="kfader" /></div>
        <div className="relative mt-[-8px] text-[19px] font-bold text-[#111] leading-[26px]">0.00 dB</div>
      </div>
    </div>
  );
}

function BottomPanel() {
  return (
    <div className="h-[470px] mt-[8px] bg-black rounded-[16px] flex flex-col">
      <div className="h-[46px] pt-[2px] shrink-0 border-b-2 border-[#444] flex items-center justify-center text-[23px] font-bold text-white">Audio Track</div>
      <div className="flex-1 flex pt-[9px]">
        <div className="ml-[25px] w-[30px] pt-[11px] flex flex-col items-center">
          <Meter h={332} dual />
          <div className="mt-[15px] text-[20px] font-bold text-white leading-[28px]">In</div>
        </div>
        <div className="ml-[27px]"><Dashed text={["Right-click to", "add pre-", "fader effects"]} /></div>
        <div className="ml-[8px]"><Fader /></div>
        <div className="ml-[8px]"><Dashed text={["Right-click to", "add post-", "fader effects"]} /></div>
        <div className="flex-1" />
        <div className="w-[100px] flex flex-col items-center text-[19px] font-bold pt-[99px]">
          <div className="text-[#aaa] leading-[26px]">Pan</div>
          <svg width="100" height="88" viewBox="-50 -46 100 88" className="mt-[8px]">
            <path d={arc(45, -147, -4)} fill="none" stroke="#4e4e4e" strokeWidth="9" />
            <path d={arc(45, 4, 147)} fill="none" stroke="#4e4e4e" strokeWidth="9" />
            <line x1="0" y1="-40" x2="0" y2="3" stroke="#dddddd" strokeWidth="5" strokeLinecap="round" />
          </svg>
          <div className="mt-[10px] text-[#aaa] leading-[26px]">0.00</div>
          <div className="mt-[101px] text-white text-[20px] leading-[28px]">Panner</div>
        </div>
        <div className="ml-[25px] w-[30px] pt-[11px] mr-[33px] flex flex-col items-center">
          <Meter h={332} dual />
          <div className="mt-[15px] text-[20px] font-bold text-white leading-[28px]">Out</div>
        </div>
      </div>
    </div>
  );
}

function Combo({ label, value, w, lw }: { label: string; value?: string; w: number; lw: number }) {
  return (
    <div style={{ width: w }} className="h-[35px] rounded-[7px] border-[4px] border-[#777] flex items-center">
      <div style={{ width: lw }} className="h-full border-r-[3px] border-[#777] flex items-center pl-[6px] text-[20px] font-bold text-[#aaa]">{label}</div>
      <div className="flex-1 pl-[7px] text-[20px] font-bold text-white">{value}</div>
      <svg width="18" height="16" viewBox="0 0 18 16" className="mr-[4px]"><path d="M0 0 H18 L9 16 Z" fill="#fff" /></svg>
    </div>
  );
}

function StatusBar() {
  return (
    <div className="h-[35px] mt-[8px] flex justify-end gap-[13px] shrink-0">
      <div className="w-[179px] h-[35px] rounded-[5px] border-[3px] border-[#999] flex items-center justify-center text-[21px] font-bold text-[#aaa]">Live Update Off</div>
      <Combo label="Platform" value="Desktop" w={313} lw={111} />
      <Combo label="Locale" w={286} lw={85} />
      <div className="w-[238px] h-[35px] rounded-[7px] border-[4px] border-[#777]" />
    </div>
  );
}

function Folder({ open }: { open?: boolean }) {
  return (
    <svg width="48" height="42" viewBox="0 0 48 42" className="shrink-0">
      <path d="M2 8 V2 H18 V8" fill="none" stroke="#111" strokeWidth="2" />
      {open ? (
        <>
          <path d="M2 40 V8 H42 V16" fill="#5a5a5a" stroke="#111" strokeWidth="3" />
          <path d="M2 40 L8 16 H47 L41 40 Z" fill="#7d7d7d" stroke="#111" strokeWidth="3" />
        </>
      ) : (
        <rect x="2" y="8" width="44" height="32" fill="#7d7d7d" stroke="#111" strokeWidth="3" />
      )}
    </svg>
  );
}

function EventIcon() {
  return (
    <svg width="46" height="36" viewBox="0 0 46 36" className="shrink-0">
      <rect x="2" y="2" width="42" height="32" rx="6" fill="#777" stroke="#1a1a1a" strokeWidth="3" />
      <path d="M8 7 L22 15 L8 23 Z" fill="#111" />
      <path d="M24 12 H38 M24 20 H38 M8 28 H38" stroke="#222" strokeWidth="3" />
    </svg>
  );
}

function TreeRow({ label, kind }: { label: string; kind: "closed" | "open" | "event" | "selected" }) {
  const ev = kind === "event" || kind === "selected";
  return (
    <div className={kind === "selected" ? "h-[50px] flex items-center bg-[#cccc82] rounded-[3px]" : "h-[50px] flex items-center"}>
      {ev ? (
        <div className="w-[76px] shrink-0" />
      ) : (
        <div className="w-[50px] pl-[5px] shrink-0">
          {kind === "open" ? (
            <svg width="20" height="18" viewBox="0 0 20 18"><path d="M0 0 H20 L10 18 Z" fill="#999" /></svg>
          ) : (
            <svg width="18" height="20" viewBox="0 0 18 20"><path d="M0 0 L18 10 L0 20 Z" fill="#999" /></svg>
          )}
        </div>
      )}
      {ev ? <EventIcon /> : <Folder open={kind === "open"} />}
      <span className={ev ? "ml-[13px] mt-[-3px] text-[23px] font-bold " + (kind === "selected" ? "text-[#111]" : "text-[#e8e8e8]") : "ml-[19px] mt-[-3px] text-[23px] font-bold text-[#e8e8e8]"}>{label}</span>
    </div>
  );
}

function IBtn() {
  return (
    <div className="w-[38px] h-[40px] rounded-[8px] bg-[#adadad] flex items-center justify-center">
      <svg width="16" height="28" viewBox="0 0 16 28" fill="none" stroke="#111" strokeWidth="2.5">
        <path d="M8 3 V25 M3 2 H6 L8 4 L10 2 H13 M3 26 H6 L8 24 L10 26 H13" />
      </svg>
    </div>
  );
}

function FooterBtn({ w, label }: { w: number; label: string }) {
  return (
    <div style={{ width: w }} className="h-[35px] rounded-[5px] border-2 border-[#777] flex items-center justify-center text-[19px] font-bold text-white">{label}</div>
  );
}

function LeftPanel() {
  return (
    <div className="w-[590px] flex flex-col">
      <div className="flex gap-[6px] pl-[1px]">
        <TabInner label="Events" active w={157} />
        <TabInner label="Banks" w={158} />
        <TabInner label="Assets" w={158} />
      </div>
      <div className="h-[1864px] bg-black rounded-[16px] rounded-tl-none px-[6px] pb-[11px] flex flex-col">
        <div className="pt-[12px] pb-[12px] px-[6px] h-[64px]">
          <div className="h-[40px] rounded-[6px] bg-[#333333] flex items-center pl-[5px]">
            <svg width="42" height="36" viewBox="0 0 42 36">
              <circle cx="14" cy="14" r="10" fill="none" stroke="#eee" strokeWidth="4" />
              <path d="M21 21 L29 31" stroke="#eee" strokeWidth="5" />
              <path d="M29 13 H39 L34 20 Z" fill="#aaa" />
            </svg>
          </div>
        </div>
        <div className="h-[1330px] bg-[#4d4d4d] rounded-b-[8px] flex flex-col">
          <TreeRow label="Ambience" kind="closed" />
          <TreeRow label="Characters" kind="closed" />
          <TreeRow label="Enemies" kind="closed" />
          <TreeRow label="Music" kind="open" />
          <TreeRow label="Gameplay Old" kind="selected" />
          <TreeRow label="Gameplay" kind="event" />
          <TreeRow label="Pickups" kind="closed" />
          <TreeRow label="UI" kind="closed" />
          <TreeRow label="Weapons" kind="closed" />
        </div>
        <div className="mt-[8px] h-[44px] bg-[#1a1a1a] flex items-center justify-between pl-[4px] pr-[5px]">
          <span className="text-[19.5px] font-bold text-[#aaaaaa]">Music/Gameplay Old</span>
          <svg width="20" height="15" viewBox="0 0 20 15"><path d="M0 0 H20 L10 15 Z" fill="#fff" /></svg>
        </div>
        <div className="mt-[4px] h-[355px] bg-[#424242] rounded-[8px] pl-[16px] pt-[16px]">
          <div className="text-[18.5px] font-bold text-[#999] leading-[24px]">Tags</div>
          <div className="mt-[10px]"><IBtn /></div>
          <div className="mt-[18px] text-[18.5px] font-bold text-[#999] leading-[24px]">User Properties</div>
          <div className="mt-[10px]"><IBtn /></div>
          <div className="mt-[18px] text-[18.5px] font-bold text-[#999] leading-[24px]">Notes</div>
          <div className="mt-[10px]"><IBtn /></div>
        </div>
        <div className="mt-[13px] px-[4px] flex gap-[6px]">
          <FooterBtn w={118} label="New Event" />
          <FooterBtn w={126} label="New Folder" />
          <div className="flex-1" />
          <FooterBtn w={84} label="Flatten" />
        </div>
      </div>
    </div>
  );
}

export default function App() {
  return (
    <div className="w-[3840px] h-[2064px] overflow-hidden bg-[#3f4444] flex flex-col font-['Noto_Sans',sans-serif]">
      <div className="h-[45px] shrink-0 bg-[#262223] flex items-center pl-[7px]">
        <svg width="26" height="34" viewBox="0 0 26 34" className="shrink-0">
          <ellipse cx="13" cy="17" rx="11" ry="15" fill="none" stroke="#39b7e6" strokeWidth="2" />
          <path d="M19 7 C11 5 7 10 11 15 C15 19 20 22 15 28 C12 30 8 29 6 27" fill="none" stroke="#e8f4f8" strokeWidth="2" />
        </svg>
        <span className="ml-[11px] text-[21px] text-[#f0f0f0] font-['Open_Sans']">Lesson 6.fspro* - Event Editor</span>
        <div className="flex-1" />
        <svg width="204" height="24" viewBox="0 0 204 24" className="mr-[39px]" fill="none" stroke="#e8e8e8" strokeWidth="1.8">
          <path d="M0 12 H20" />
          <rect x="91" y="6" width="15" height="16" rx="3" />
          <path d="M95 3 Q95 2 98 2 H106 Q111 2 111 7 V16" />
          <path d="M184 2 L204 22 M204 2 L184 22" />
        </svg>
      </div>
      <div className="h-[47px] shrink-0 border-b-2 border-[#343838] flex items-center pl-[27px] gap-[38px] text-[23px] font-bold text-[#f0f0f0]">
        {["File", "Edit", "Create", "View", "Window", "Scripts", "FMOD.io", "Help"].map((m) => <span key={m}>{m}</span>)}
      </div>
      <div className="flex pt-[8px] pl-[8px] gap-[10px]">
        <LeftPanel />
        <div className="w-[3224px] flex flex-col">
          <div className="flex gap-[8px] h-[1439px]">
            <div className="w-[2800px] flex flex-col">
              <div className="flex gap-[6px]">
                <TabInner label="Gameplay O..." active w={260} />
                <TabInner w={157} />
              </div>
              <EventPanel />
              <div className="mt-[9px]"><MiniMap /></div>
            </div>
            <Overview />
          </div>
          <BottomPanel />
        </div>
      </div>
      <div className="pr-[9px]"><StatusBar /></div>
    </div>
  );
}
